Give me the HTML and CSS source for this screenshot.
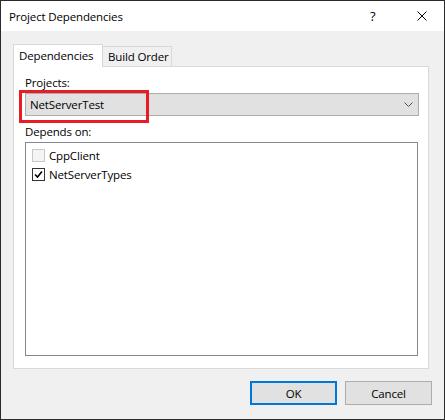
FILE: index.html
```html
<!DOCTYPE html>
<html>
<head>
<meta charset="utf-8">
<link rel="stylesheet" href="styles.css">
</head>
<body>
<div class="window">
  <div class="titlebar">
    <span class="title">Project Dependencies</span>
    <span class="help">?</span>
    <svg class="close" width="10" height="10" viewBox="0 0 10 10"><path d="M0.5 0.5 L9.5 9.5 M9.5 0.5 L0.5 9.5" stroke="#000" stroke-width="1" fill="none"/></svg>
  </div>
  <div class="client">
    <div class="tabs">
      <div class="tab active">Dependencies</div>
      <div class="tab">Build Order</div>
    </div>
    <div class="panel">
      <div class="label">Projects:</div>
      <div class="combo">
        <span>NetServerTest</span>
        <svg width="9" height="5" viewBox="0 0 9 5"><path d="M0.5 0.5 L4.5 4.5 L8.5 0.5" stroke="#555" stroke-width="1" fill="none"/></svg>
      </div>
      <div class="label second">Depends on:</div>
      <div class="list">
        <div class="item"><span class="cb"></span>CppClient</div>
        <div class="item"><span class="cb checked"><svg width="9" height="9" viewBox="0 0 9 9"><path d="M1 4.5 L3.5 7 L8 1.5" stroke="#000" stroke-width="1.6" fill="none"/></svg></span>NetServerTypes</div>
      </div>
    </div>
    <div class="footer">
      <div class="btn default">OK</div>
      <div class="btn">Cancel</div>
    </div>
  </div>
  <div class="highlight"></div>
</div>
</body>
</html>
```
FILE: styles.css
```css
* { box-sizing: border-box; }
body { margin: 0; font-family: "Open Sans", "Noto Sans", sans-serif; font-size: 11.5px; letter-spacing: -0.15px; color: #000; }
.window { position: relative; width: 445px; height: 420px; border: 1px solid #2b2b2b; background: #f0f0f0; display: flex; flex-direction: column; }
.titlebar { height: 30px; background: #fff; display: flex; align-items: center; padding-left: 8px; }
.title { flex: 1; }
.help { width: 10px; margin-right: 37px; font-size: 13px; }
.close { margin-right: 17px; }
.client { flex: 1; padding: 13px 12px 0 12px; display: flex; flex-direction: column; }
.tabs { display: flex; height: 22px; align-items: flex-end; }
.tab { height: 20px; width: 70px; border: 1px solid #d9d9d9; border-bottom: none; padding: 0 0 0 5px; display: flex; align-items: center; background: #f0f0f0; margin-left: -1px; }
.tab.active { height: 23px; margin-bottom: -1px; background: #fff; position: relative; z-index: 1; width: 90px; margin-left: 0; padding: 0 5px; padding-bottom: 2px; }
.panel { width: 416px; height: 303px; border: 1px solid #d9d9d9; background: #fff; padding: 8px 9px 0 11px; }
.label { height: 16px; line-height: 16px; margin-bottom: 2px; }
.label.second { margin-top: 8px; margin-bottom: 2px; }
.combo { height: 23px; border: 1px solid #adadad; background: #e1e1e1; display: flex; align-items: center; justify-content: space-between; padding: 0 5px 0 4px; }
.list { width: 393px; height: 214px; border: 1px solid #828790; margin-top: 2px; padding-top: 3px; }
.item { display: flex; align-items: center; height: 19px; padding-left: 6px; }
.cb { width: 13px; height: 13px; border: 1px solid #c8c8c8; background: #f4f4f4; margin-right: 4px; display: flex; align-items: center; justify-content: center; }
.cb.checked { border-color: #333; background: #fff; }
.footer { display: flex; justify-content: flex-end; gap: 8px; margin-top: 12px; }
.btn { width: 87px; height: 24px; border: 1px solid #adadad; background: #e1e1e1; display: flex; align-items: center; justify-content: center; }
.btn.default { border: 2px solid #0078d7; }
.highlight { position: absolute; left: 18px; top: 89px; width: 130px; height: 33px; border: 3px solid #e81c24; }
```
